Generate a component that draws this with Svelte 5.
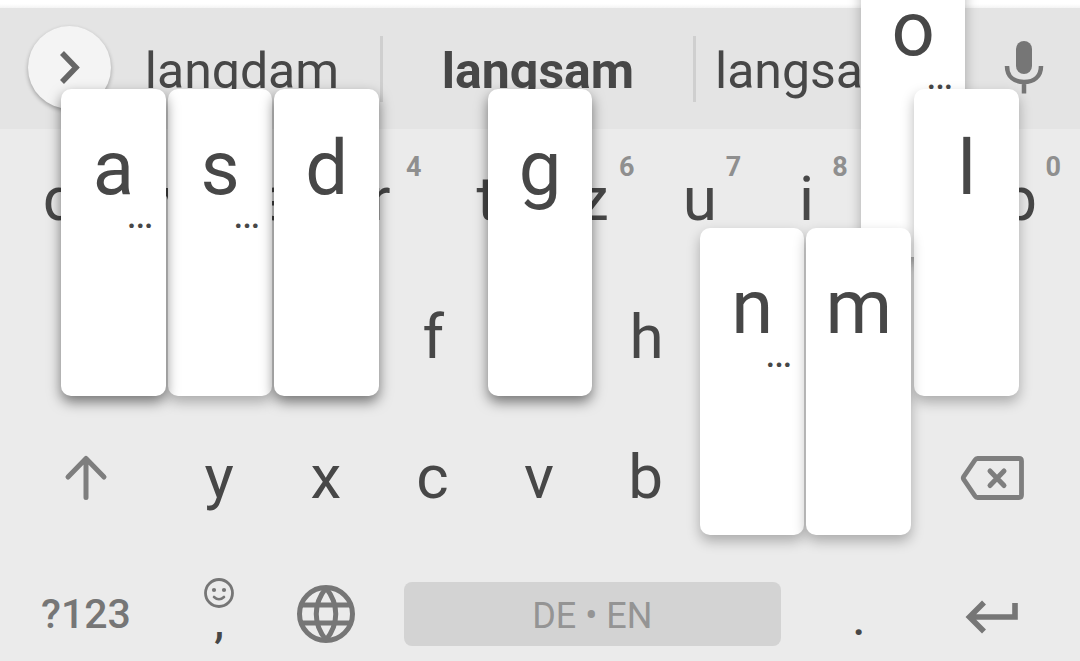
<script>
  const suggestions = [
    { text: 'langdam' },
    { text: 'langsam', best: true },
    { text: 'langsame' }
  ];

  const rowTop = [
    { ch: 'q', hint: '1' },
    { ch: 'w', hint: '2' },
    { ch: 'e', hint: '3' },
    { ch: 'r', hint: '4' },
    { ch: 't', hint: '5' },
    { ch: 'z', hint: '6' },
    { ch: 'u', hint: '7' },
    { ch: 'i', hint: '8' },
    { ch: 'o', hint: '9', popup: true, more: true, under: true },
    { ch: 'p', hint: '0' }
  ];

  const rowHome = [
    { ch: 'a', popup: true, more: true },
    { ch: 's', popup: true, more: true, under: true },
    { ch: 'd', popup: true },
    { ch: 'f' },
    { ch: 'g', popup: true },
    { ch: 'h' },
    { ch: 'j' },
    { ch: 'k' },
    { ch: 'l', popup: true, soft: true }
  ];

  const rowBottom = [
    { ch: 'y' },
    { ch: 'x' },
    { ch: 'c' },
    { ch: 'v' },
    { ch: 'b' },
    { ch: 'n', popup: true, more: true, soft: true },
    { ch: 'm', popup: true, soft: true }
  ];
</script>

{#snippet letter(key)}
  <button class="key" type="button">
    {key.ch}
    {#if key.hint}<span class="hint">{key.hint}</span>{/if}
    {#if key.popup}
      <span class="popup" class:under={key.under} class:soft={key.soft}>
        {key.ch}
        {#if key.more}<span class="more">…</span>{/if}
      </span>
    {/if}
  </button>
{/snippet}

<main class="keyboard">
  <div class="bar">
    <button class="expand" type="button" aria-label="Expand toolbar">
      <svg width="83" height="83" viewBox="0 0 83 83">
        <path d="M34 27 L48 41.500 L34 56" fill="none" stroke="#666" stroke-width="5.500" />
      </svg>
    </button>
    {#each suggestions as s}
      <button class="suggestion" class:best={s.best} type="button">{s.text}</button>
    {/each}
    <button class="mic" type="button" aria-label="Voice input">
      <svg width="40" height="56" viewBox="0 0 40 56">
        <rect x="12" y="2" width="16" height="33" rx="8" fill="#767676" />
        <path d="M3 27 C3 38 10.500 43 20 43 C29.500 43 37 38 37 27 M20 43 V54.500" fill="none" stroke="#767676" stroke-width="4.500" />
      </svg>
    </button>
  </div>

  <div class="row">
    {#each rowTop as key}{@render letter(key)}{/each}
  </div>

  <div class="row home">
    {#each rowHome as key}{@render letter(key)}{/each}
  </div>

  <div class="row edged">
    <button class="key side" type="button" aria-label="Shift">
      <svg width="44" height="48" viewBox="0 0 44 48">
        <path d="M22 43.500 V5 M4 23 L22 4.500 L40 23" fill="none" stroke="#7e7e7e" stroke-width="5" stroke-linecap="round" stroke-linejoin="round" />
      </svg>
    </button>
    {#each rowBottom as key}{@render letter(key)}{/each}
    <button class="key side" type="button" aria-label="Backspace">
      <svg width="66" height="46" viewBox="0 0 66 46">
        <path d="M18.500 3.500 H60 Q62.500 3.500 62.500 6 V40 Q62.500 42.500 60 42.500 H18.500 Q17 42.500 16 41 L4.500 24 Q4 23 4.500 22 L16 5 Q17 3.500 18.500 3.500 Z" fill="none" stroke="#7e7e7e" stroke-width="4.800" />
        <path d="M31 16 L45 30.500 M45 16 L31 30.500" stroke="#7e7e7e" stroke-width="5" stroke-linecap="round" />
      </svg>
    </button>
  </div>

  <div class="row edged functions">
    <button class="key side symbols" type="button">?123</button>
    <button class="key comma" type="button">
      <svg width="32" height="32" viewBox="0 0 32 32" aria-hidden="true">
        <circle cx="16" cy="16" r="13.500" fill="none" stroke="#767676" stroke-width="2.800" />
        <circle cx="11" cy="13" r="2.100" fill="#767676" />
        <circle cx="21" cy="13" r="2.100" fill="#767676" />
        <path d="M11 20 Q16 24.500 21 20" fill="none" stroke="#767676" stroke-width="2.600" stroke-linecap="round" />
      </svg>
      <span>,</span>
    </button>
    <button class="key" type="button" aria-label="Switch language">
      <svg width="60" height="60" viewBox="0 0 60 60">
        <g fill="none" stroke="#767676" stroke-width="5" stroke-linejoin="bevel">
          <circle cx="30" cy="30" r="26.500" />
          <path d="M30 4 C17 20 17 40 30 56 C43 40 43 20 30 4 Z" />
          <path d="M5 21 H55 M5 39 H55" />
        </g>
      </svg>
    </button>
    <div class="space-cell">
      <button class="space" type="button">DE • EN</button>
    </div>
    <button class="key period" type="button">.</button>
    <button class="key side enter" type="button" aria-label="Enter">
      <svg width="54" height="36" viewBox="0 0 54 36">
        <path d="M50 4 V18 H6 M19 3.500 L4.500 18 L19 32.500" fill="none" stroke="#767676" stroke-width="5.600" />
      </svg>
    </button>
  </div>
</main>

<style>
  :global(body) {
    margin: 0;
    background: #ebebeb;
    overflow: hidden;
  }

  .keyboard {
    box-sizing: border-box;
    min-height: 100vh;
    padding-top: 8px;
    overflow: hidden;
    background: linear-gradient(#fff 0, #fff 4px, #f4f4f4 8px, #ebebeb 8px);
    color: #474747;
    font-family: Roboto, sans-serif;
  }

  button {
    margin: 0;
    padding: 0;
    border: 0;
    background: none;
    color: inherit;
    font: inherit;
  }

  svg {
    display: block;
  }

  .bar {
    display: grid;
    grid-template-columns: 104px 279fr 313fr 272fr 112px;
    align-items: center;
    height: 121px;
    background: #e4e4e4;
  }

  .expand {
    justify-self: end;
    margin: 0 -7px 2px 0;
    border-radius: 50%;
    background: #f4f4f4;
    box-shadow: 0 2px 4px rgba(0, 0, 0, 0.3);
  }

  .expand,
  .mic {
    position: relative;
    z-index: 0;
  }

  .mic {
    justify-self: center;
    margin-bottom: 4px;
  }

  .suggestion {
    box-sizing: border-box;
    height: 66px;
    padding-top: 4px;
    border-right: 3px solid #cfcfcf;
    font-size: 50px;
    line-height: 62px;
    white-space: nowrap;
  }

  .suggestion:nth-of-type(4) {
    border-right: 0;
    padding-left: 19px;
    text-align: left;
  }

  .best {
    font-weight: 700;
  }

  .row {
    display: flex;
    height: 139px;
    padding: 0 7px;
  }

  .home {
    padding: 0 calc(5% + 6px);
  }

  .edged {
    padding: 0 8px 0 6px;
  }

  .key {
    position: relative;
    display: flex;
    flex: 1 1 0;
    align-items: center;
    justify-content: center;
    min-width: 0;
    font-size: 62px;
    line-height: 139px;
  }

  .home .key {
    line-height: 137px;
    align-items: flex-start;
  }

  .edged .key {
    flex: 0 0 10%;
  }

  .edged .side {
    flex: 1 1 0;
  }

  .side svg {
    margin-top: 2px;
  }

  .hint {
    position: absolute;
    top: 20px;
    right: 12px;
    color: #8f8f8f;
    font-size: 27px;
    font-weight: 700;
    line-height: 36px;
  }

  .popup {
    position: absolute;
    z-index: 2;
    top: -179px;
    right: 1px;
    bottom: 11px;
    left: 1px;
    border-radius: 10px;
    background: #fff;
    box-shadow: 0 6px 13px rgba(0, 0, 0, 0.5);
    font-size: 76px;
    line-height: 158px;
    text-align: center;
  }

  .popup.soft {
    box-shadow: 0 6px 13px rgba(0, 0, 0, 0.28);
  }

  .popup.under {
    z-index: 1;
    box-shadow: 0 6px 13px rgba(0, 0, 0, 0.28);
  }

  .more {
    position: absolute;
    top: 105px;
    right: 12px;
    font-size: 41px;
    line-height: 40px;
  }

  .functions {
    height: 115px;
  }

  .functions .key {
    height: 136px;
  }

  .functions .symbols {
    color: #767676;
    font-size: 41px;
    font-weight: 500;
    line-height: 136px;
  }

  .functions .comma {
    flex-direction: column;
    justify-content: flex-start;
    box-sizing: border-box;
    padding-top: 31px;
    font-size: 44px;
    font-weight: 500;
    line-height: 26px;
  }

  .functions .period {
    align-items: flex-start;
    box-sizing: border-box;
    padding-top: 61px;
    font-size: 44px;
    font-weight: 500;
    line-height: 26px;
  }

  .functions .enter {
    box-sizing: border-box;
    padding-top: 4px;
  }

  .space-cell {
    flex: 0 0 40%;
    box-sizing: border-box;
    padding: 36px 25px 0;
  }

  .space {
    width: 100%;
    height: 64px;
    padding-top: 4px;
    border-radius: 8px;
    background: #d3d3d3;
    color: #949494;
    font-size: 36px;
    line-height: 60px;
  }
</style>
